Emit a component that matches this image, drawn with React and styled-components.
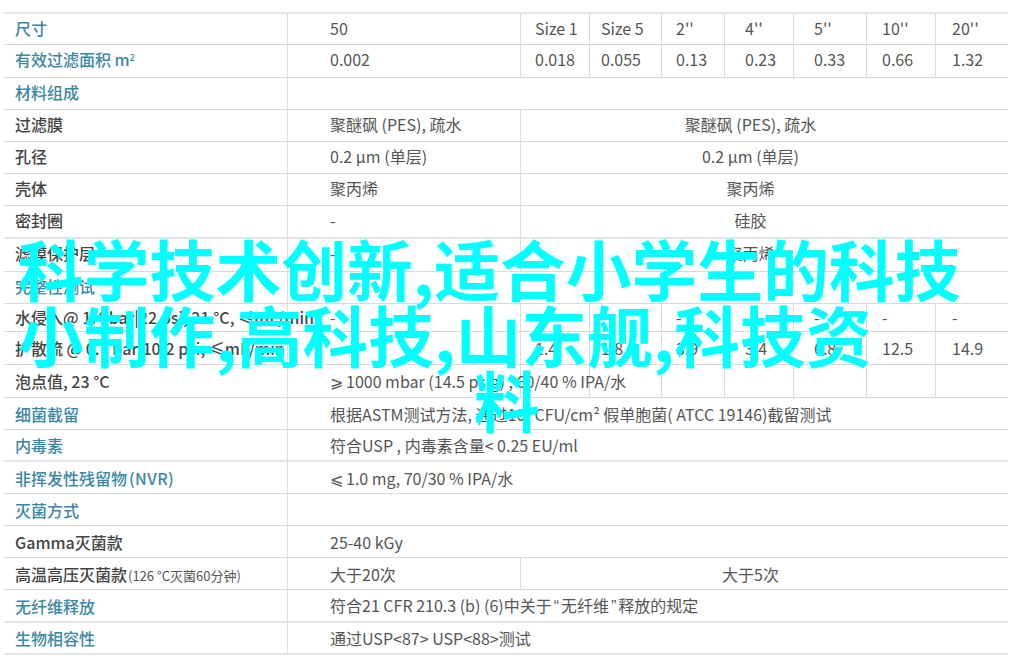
import React from 'react';
import styled, { createGlobalStyle } from 'styled-components';

const Global = createGlobalStyle`
  html, body { margin: 0; padding: 0; background: #fff; }
  body { font-family: "Noto Sans CJK SC", "Noto Sans", sans-serif; }
`;

const Page = styled.div`
  position: relative;
  width: 1014px;
  height: 661px;
  overflow: hidden;
  padding: 12px 6px 0 4px;
  box-sizing: border-box;
`;

const Table = styled.table`
  width: 1004px;
  table-layout: fixed;
  border-collapse: separate;
  border-spacing: 0;
  border-top: 2px solid #e4e4e4;
  font-size: 16px;
  line-height: 1;
  color: #555;
`;

const Cell = styled.td`
  box-sizing: border-box;
  height: ${(p) => p.$h}px;
  padding: 0 ${(p) => p.$padRight || 0}px ${(p) => p.$lift}px ${(p) => p.$pad}px;
  border-bottom: ${(p) => (p.$thick ? '2px solid #e4e4e4' : '1px solid #d9d9d9')};
  border-left: ${(p) => (p.$first ? 'none' : '1px solid #dcdcdc')};
  text-align: ${(p) => (p.$center ? 'center' : 'left')};
  white-space: nowrap;
  overflow: visible;
  vertical-align: middle;
`;

const Label = styled(Cell)`
  font-weight: 500;
  color: ${(p) => (p.$teal ? '#3c87a4' : '#444')};
`;

const Note = styled.span`
  margin-left: 1px;
  font-size: 13px;
  font-weight: 400;
  color: #555;
`;

const Sup = styled.sup`
  font-size: 9px;
  line-height: 0;
  vertical-align: 5px;
`;

const Quote = styled.span`
  margin: 0 2px;
  font-family: "Liberation Sans", sans-serif;
`;

const Sym = styled.span`
  display: inline-block;
  width: 16px;
`;

const Abbr = styled.span`
  margin-left: 2px;
  letter-spacing: 0.4px;
`;

const Banner = styled.div`
  position: absolute;
  left: 18px;
  top: 235px;
  width: 1000px;
  font-size: 65.8px;
  font-weight: 700;
  line-height: 65.5px;
  color: #0ff;
  white-space: nowrap;
`;

const BannerLast = styled.div`
  padding-left: 456px;
`;

const widths = [283, 233, 69, 72, 63, 69, 73, 69, 73];
const pads = [11, 42, 14, 11, 14, 20, 20, 15, 16];

const size = ['Size 1', 'Size 5', "2''", "4''", "5''", "10''", "20''"];
const area = ['0.018', '0.055', '0.13', '0.23', '0.33', '0.66', '1.32'];
const dash = ['-', '-', '-', '-', '-', '-', '-'];
const flow = ['1.4', '1.8', '3.9', '3.4', '6.8', '12.5', '14.9'];
const none = ['', '', '', '', '', '', ''];

const rows = [
  { h: 31, lift: 2, teal: true, label: '尺寸', v: '50', cols: size },
  { h: 33, lift: 4, teal: true, label: <>有效过滤面积 m<Sup>2</Sup></>, v: '0.002', cols: area },
  { h: 32, lift: 4, teal: true, label: '材料组成', v: '', wide: '' },
  { h: 32, lift: 4, label: '过滤膜', v: '聚醚砜 (PES), 疏水', mid: '聚醚砜 (PES), 疏水' },
  { h: 32, lift: 4, label: '孔径', v: '0.2 µm (单层)', mid: '0.2 µm (单层)' },
  { h: 32, lift: 4, label: '壳体', v: '聚丙烯', mid: '聚丙烯' },
  { h: 33, lift: 4, thick: true, label: '密封圈', v: '-', mid: '硅胶' },
  { h: 33, lift: 4, label: '滤膜保护层', v: '-', mid: '聚丙烯' },
  { h: 32, lift: 4, teal: true, label: '完整性测试', v: '', wide: '' },
  { h: 28, lift: 2, label: '水侵入@ 1.4 bar|22 psi, 21 °C, ≤mL/min', v: '-', cols: dash },
  { h: 33, lift: 0, label: '扩散流 @ 0.7 bar|10.2 psi, ≤mL/min', v: '', cols: flow },
  { h: 33, lift: 0, label: '泡点值, 23 °C', v: <><Sym>⩾</Sym>1000 mbar (14.5 psig) , 60/40 % IPA/水</>, cols: none },
  { h: 32, lift: 0, teal: true, label: '细菌截留', v: '根据ASTM测试方法, 通过10⁷ CFU/cm² 假单胞菌( ATCC 19146)截留测试', wide: '' },
  { h: 32, lift: 0, teal: true, thick: true, label: '内毒素', v: '符合USP , 内毒素含量< 0.25 EU/ml', wide: '' },
  { h: 32, lift: 0, teal: true, label: <>非挥发性残留物<Abbr>(NVR)</Abbr></>, v: <><Sym>⩽</Sym>1.0 mg, 70/30 % IPA/水</>, wide: '' },
  { h: 32, lift: 0, teal: true, label: '灭菌方式', v: '', wide: '' },
  { h: 32, lift: 0, label: 'Gamma灭菌款', v: '25-40 kGy', wide: '' },
  { h: 32, lift: 0, label: <>高温高压灭菌款<Note>(126 °C灭菌60分钟)</Note></>, v: '大于20次', mid: '大于5次' },
  { h: 33, lift: 0, teal: true, thick: true, label: '无纤维释放', v: <>符合21 CFR 210.3 (b) (6)中关于<Quote>“</Quote>无纤维<Quote>”</Quote>释放的规定</>, wide: '' },
  { h: 32, lift: 0, teal: true, thick: true, label: '生物相容性', v: '通过USP<87> USP<88>测试', wide: '' },
];

const Row = ({ row }) => {
  const common = { $h: row.h, $thick: row.thick, $lift: row.lift };
  return (
    <tr>
      <Label {...common} $first $teal={row.teal} $pad={pads[0]}>{row.label}</Label>
      {row.wide !== undefined ? (
        <Cell {...common} $pad={pads[1]} colSpan={8}>{row.v}</Cell>
      ) : (
        <Cell {...common} $pad={pads[1]}>{row.v}</Cell>
      )}
      {row.mid !== undefined && (
        <Cell {...common} $pad={0} $padRight={28} $center colSpan={7}>{row.mid}</Cell>
      )}
      {row.cols && row.cols.map((text, i) => (
        <Cell key={i} {...common} $pad={pads[i + 2]}>{text}</Cell>
      ))}
    </tr>
  );
};

export default function App() {
  return (
    <Page>
      <Global />
      <Table>
        <colgroup>
          {widths.map((w, i) => <col key={i} style={{ width: w }} />)}
        </colgroup>
        <tbody>
          {rows.map((row, i) => <Row key={i} row={row} />)}
        </tbody>
      </Table>
      <Banner>
        <div>科学技术创新,适合小学生的科技</div>
        <div>小制作,高科技,山东舰,科技资</div>
        <BannerLast>料</BannerLast>
      </Banner>
    </Page>
  );
}
